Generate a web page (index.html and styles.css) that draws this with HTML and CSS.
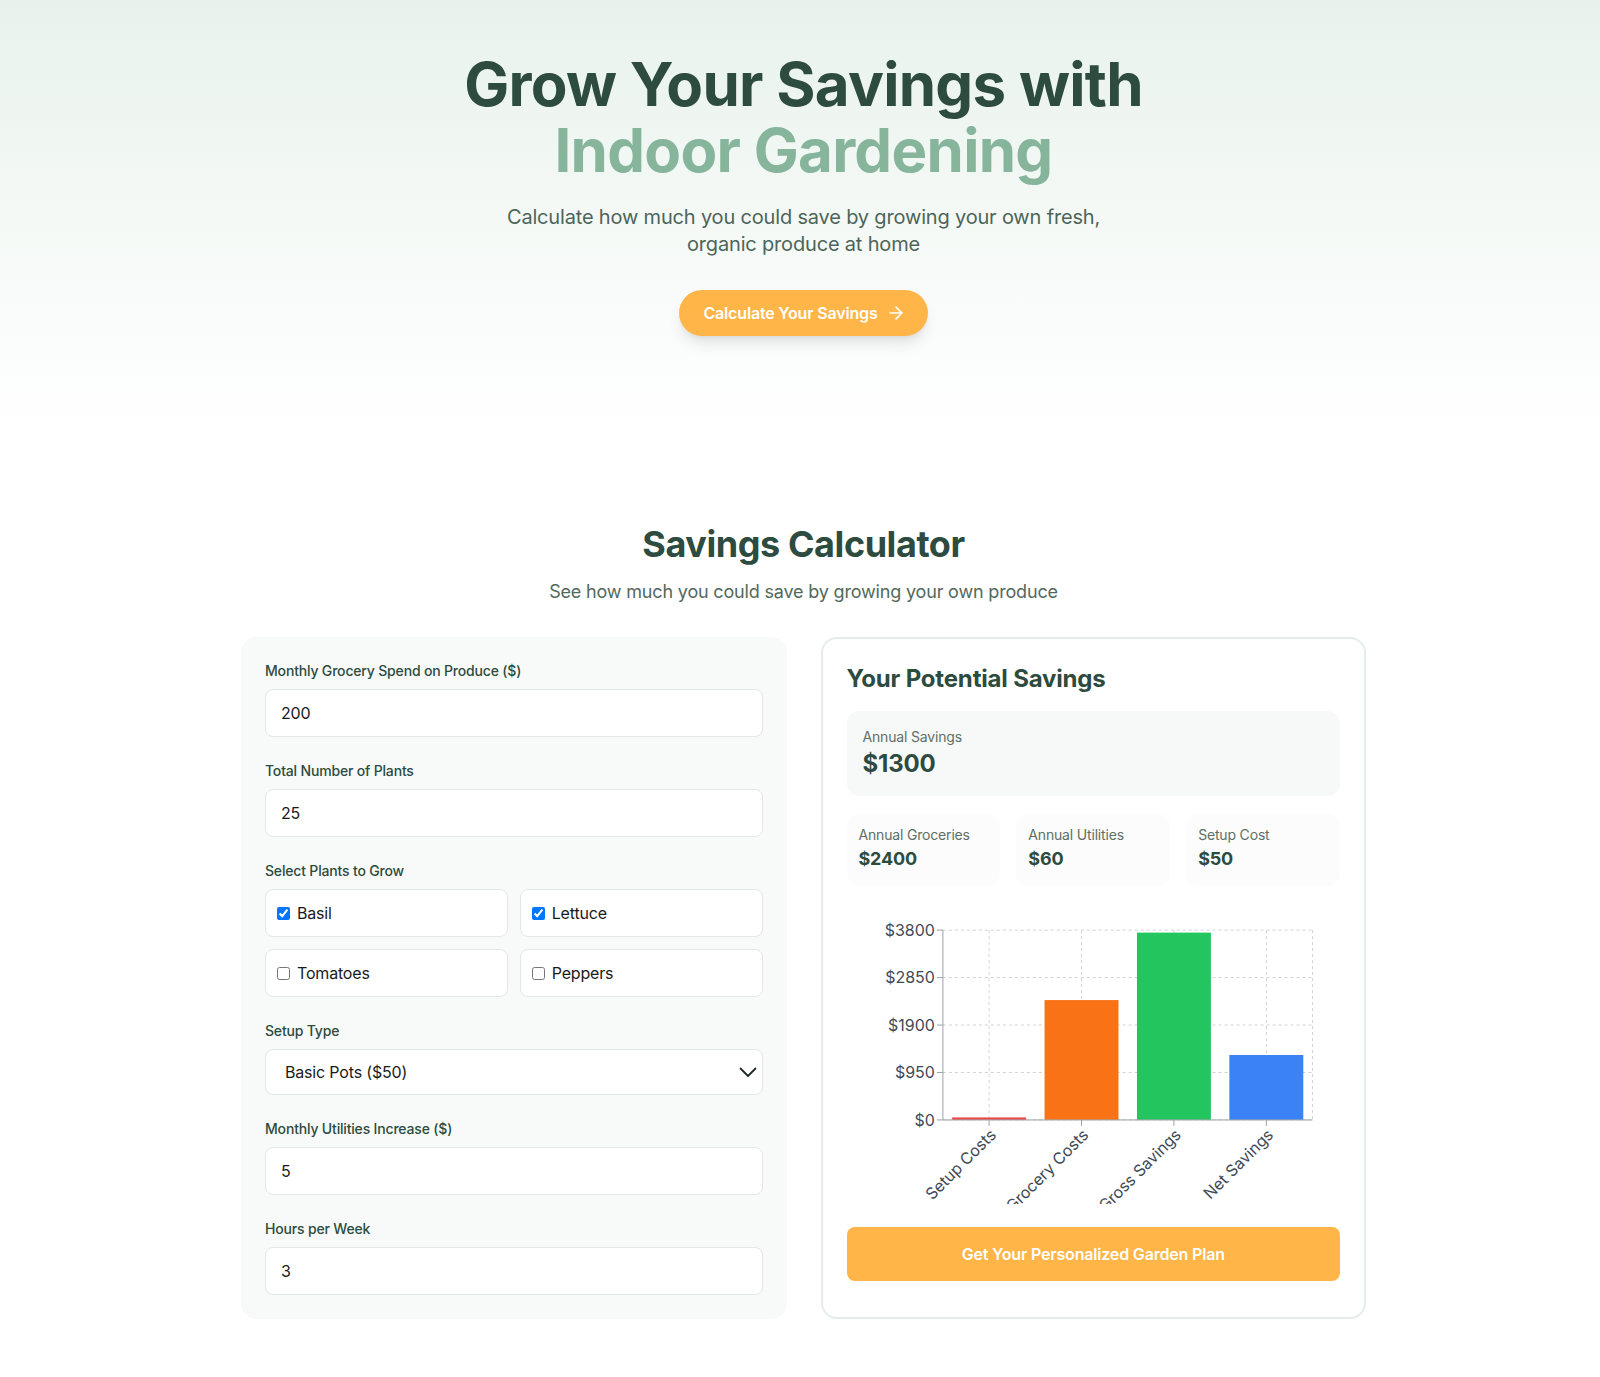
FILE: index.html
```html
<!DOCTYPE html>
<html lang="en">
<head>
<meta charset="utf-8">
<title>Indoor Gardening Savings</title>
<link rel="stylesheet" href="styles.css">
</head>
<body>
<section class="hero">
  <h1 class="hero-title">Grow Your Savings with <span class="hero-accent">Indoor Gardening</span></h1>
  <p class="hero-sub">Calculate how much you could save by growing your own fresh, organic produce at home</p>
  <button class="cta" type="button">Calculate Your Savings
    <svg class="cta-icon" viewBox="0 0 24 24" width="20" height="20" fill="none" stroke="currentColor" stroke-width="2" stroke-linecap="round" stroke-linejoin="round"><path d="M5 12h14"/><path d="M12 5l7 7-7 7"/></svg>
  </button>
</section>

<section class="calc">
  <div class="calc-inner">
    <h2 class="calc-title">Savings Calculator</h2>
    <p class="calc-sub">See how much you could save by growing your own produce</p>

    <div class="calc-grid">
      <div class="form-panel">
        <div class="field">
          <label class="field-label">Monthly Grocery Spend on Produce ($)</label>
          <input class="text-input" type="text" value="200">
        </div>
        <div class="field">
          <label class="field-label">Total Number of Plants</label>
          <input class="text-input" type="text" value="25">
        </div>
        <div class="field">
          <label class="field-label">Select Plants to Grow</label>
          <div class="plant-grid">
            <label class="plant"><input type="checkbox" class="plant-check" checked>Basil</label>
            <label class="plant"><input type="checkbox" class="plant-check" checked>Lettuce</label>
            <label class="plant"><input type="checkbox" class="plant-check">Tomatoes</label>
            <label class="plant"><input type="checkbox" class="plant-check">Peppers</label>
          </div>
        </div>
        <div class="field">
          <label class="field-label">Setup Type</label>
          <div class="select-wrap">
            <select class="select-input">
              <option>Basic Pots ($50)</option>
              <option>Hydroponic Kit ($200)</option>
            </select>
            <svg class="select-chevron" viewBox="0 0 18 10" width="18" height="10" fill="none" stroke="#1f2a24" stroke-width="1.8" stroke-linecap="round" stroke-linejoin="round"><path d="M1.5 1.5l7.5 7.5 7.5-7.5"/></svg>
          </div>
        </div>
        <div class="field">
          <label class="field-label">Monthly Utilities Increase ($)</label>
          <input class="text-input" type="text" value="5">
        </div>
        <div class="field">
          <label class="field-label">Hours per Week</label>
          <input class="text-input" type="text" value="3">
        </div>
      </div>

      <div class="results-panel">
        <h3 class="results-title">Your Potential Savings</h3>
        <div class="savings-box">
          <div class="stat-label">Annual Savings</div>
          <div class="savings-value">$1300</div>
        </div>
        <div class="stats">
          <div class="stat">
            <div class="stat-label">Annual Groceries</div>
            <div class="stat-value">$2400</div>
          </div>
          <div class="stat">
            <div class="stat-label">Annual Utilities</div>
            <div class="stat-value">$60</div>
          </div>
          <div class="stat">
            <div class="stat-label">Setup Cost</div>
            <div class="stat-value">$50</div>
          </div>
        </div>

        <svg class="chart" viewBox="0 0 494 295" width="494" height="295">
          <g class="grid" stroke="#cfd3d6" stroke-dasharray="3 3" fill="none">
            <line x1="96" y1="21" x2="466" y2="21"/>
            <line x1="96" y1="68.5" x2="466" y2="68.5"/>
            <line x1="96" y1="116" x2="466" y2="116"/>
            <line x1="96" y1="163.5" x2="466" y2="163.5"/>
            <line x1="96" y1="211" x2="466" y2="211"/>
            <line x1="142.25" y1="21" x2="142.25" y2="211"/>
            <line x1="234.75" y1="21" x2="234.75" y2="211"/>
            <line x1="327.25" y1="21" x2="327.25" y2="211"/>
            <line x1="419.75" y1="21" x2="419.75" y2="211"/>
            <line x1="466" y1="21" x2="466" y2="211"/>
          </g>
          <rect x="105.25" y="208.5" width="74" height="2.5" fill="#ef4444"/>
          <rect x="197.75" y="91" width="74" height="120" fill="#f97316"/>
          <rect x="290.25" y="23.5" width="74" height="187.5" fill="#22c55e"/>
          <rect x="382.75" y="146" width="74" height="65" fill="#3b82f6"/>
          <g stroke="#9ca3a6" fill="none">
            <line x1="96" y1="21" x2="96" y2="211"/>
            <line x1="96" y1="211" x2="466" y2="211"/>
            <line x1="90" y1="21" x2="96" y2="21"/>
            <line x1="90" y1="68.5" x2="96" y2="68.5"/>
            <line x1="90" y1="116" x2="96" y2="116"/>
            <line x1="90" y1="163.5" x2="96" y2="163.5"/>
            <line x1="90" y1="211" x2="96" y2="211"/>
            <line x1="142.25" y1="211" x2="142.25" y2="217"/>
            <line x1="234.75" y1="211" x2="234.75" y2="217"/>
            <line x1="327.25" y1="211" x2="327.25" y2="217"/>
            <line x1="419.75" y1="211" x2="419.75" y2="217"/>
          </g>
          <g class="tick-text" text-anchor="end">
            <text x="88" y="21" dy="0.355em">$3800</text>
            <text x="88" y="68.5" dy="0.355em">$2850</text>
            <text x="88" y="116" dy="0.355em">$1900</text>
            <text x="88" y="163.5" dy="0.355em">$950</text>
            <text x="88" y="211" dy="0.355em">$0</text>
            <text x="142.25" y="219" dy="0.71em" transform="rotate(-45 142.25 219)">Setup Costs</text>
            <text x="234.75" y="219" dy="0.71em" transform="rotate(-45 234.75 219)">Grocery Costs</text>
            <text x="327.25" y="219" dy="0.71em" transform="rotate(-45 327.25 219)">Gross Savings</text>
            <text x="419.75" y="219" dy="0.71em" transform="rotate(-45 419.75 219)">Net Savings</text>
          </g>
        </svg>

        <button class="plan-btn" type="button">Get Your Personalized Garden Plan</button>
      </div>
    </div>
  </div>
</section>
</body>
</html>
```

FILE: styles.css
```css
html, body {
  margin: 0;
  padding: 0;
  background: #ffffff;
}

body {
  font-family: Inter, "Noto Sans", "Liberation Sans", sans-serif;
  color: #1f2a24;
  letter-spacing: -0.011em;
}

.hero {
  background: linear-gradient(180deg, #e8f2ec 0%, #f3f8f5 45%, #ffffff 100%);
  padding: 51px 0 92px 7px;
  text-align: center;
}

.hero-title {
  margin: 0;
  font-size: 60px;
  line-height: 66px;
  font-weight: 700;
  color: #2d4b3e;
  letter-spacing: -0.012em;
}

.hero-accent {
  display: block;
  color: #86b59c;
}

.hero-sub {
  margin: 21px auto 0;
  max-width: 620px;
  font-size: 20px;
  line-height: 27px;
  color: #4d6559;
}

.cta {
  margin-top: 32px;
  display: inline-flex;
  align-items: center;
  gap: 8px;
  padding: 12px 22px 12px 24px;
  border: 0;
  border-radius: 9999px;
  background: #ffb547;
  color: #ffffff;
  font-family: Inter, "Noto Sans", sans-serif;
  font-size: 16px;
  line-height: 22px;
  font-weight: 600;
  letter-spacing: -0.011em;
  box-shadow: 0 10px 15px -3px rgba(0, 0, 0, 0.1), 0 4px 6px -4px rgba(0, 0, 0, 0.1);
}

.cta-icon {
  display: block;
}

.calc {
  padding: 96px 0 61px 7px;
}

.calc-inner {
  width: 1125px;
  margin: 0 auto;
}

.calc-title {
  margin: 0;
  text-align: center;
  font-size: 36px;
  line-height: 40px;
  font-weight: 700;
  color: #2d4b3e;
  letter-spacing: -0.012em;
}

.calc-sub {
  margin: 14px 0 0;
  text-align: center;
  font-size: 18px;
  line-height: 28px;
  color: #52695d;
}

.calc-grid {
  margin-top: 31px;
  display: grid;
  grid-template-columns: 1fr 1fr;
  gap: 34px;
}

.form-panel {
  background: #f7faf8;
  border-radius: 16px;
  padding: 24px;
}

.field {
  margin-bottom: 24px;
}

.field:last-child {
  margin-bottom: 0;
}

.field-label {
  display: block;
  margin-bottom: 8px;
  font-size: 14px;
  line-height: 20px;
  font-weight: 500;
  color: #2d4b3e;
}

.text-input {
  box-sizing: border-box;
  display: block;
  width: 100%;
  height: 48px;
  padding: 0 15px;
  border: 1px solid #e2e9e5;
  border-radius: 8px;
  background: #ffffff;
  font-family: Inter, "Noto Sans", sans-serif;
  font-size: 16px;
  letter-spacing: -0.011em;
  color: #1a1a1a;
  outline: none;
}

.plant-grid {
  display: grid;
  grid-template-columns: 1fr 1fr;
  gap: 12px;
}

.plant {
  box-sizing: border-box;
  display: flex;
  align-items: center;
  gap: 7px;
  height: 48px;
  padding: 0 11px;
  border: 1px solid #e2e9e5;
  border-radius: 8px;
  background: #ffffff;
  font-size: 16px;
  color: #1a1a1a;
}

.plant-check {
  margin: 0;
  width: 13px;
  height: 13px;
}

.select-wrap {
  position: relative;
}

.select-input {
  box-sizing: border-box;
  display: block;
  width: 100%;
  height: 46px;
  padding: 0 40px 0 19px;
  border: 1px solid #e2e9e5;
  border-radius: 8px;
  background: #ffffff;
  font-family: Inter, "Noto Sans", sans-serif;
  font-size: 16px;
  letter-spacing: -0.011em;
  color: #1a1a1a;
  appearance: none;
  -webkit-appearance: none;
  outline: none;
}

.select-chevron {
  position: absolute;
  right: 6px;
  top: 18px;
  pointer-events: none;
}

.results-panel {
  background: #ffffff;
  border: 2px solid #e4ede9;
  border-radius: 16px;
  padding: 24px;
}

.results-title {
  margin: 0 0 16px;
  font-size: 24px;
  line-height: 32px;
  font-weight: 700;
  color: #2d4b3e;
}

.savings-box {
  background: #f6f9f7;
  border-radius: 12px;
  padding: 16px;
  margin-bottom: 18px;
}

.stat-label {
  font-size: 14px;
  line-height: 20px;
  color: #5f6f67;
}

.savings-value {
  font-size: 24px;
  line-height: 32px;
  font-weight: 700;
  color: #2d4b3e;
  margin-top: 1px;
}

.stats {
  display: grid;
  grid-template-columns: repeat(3, 1fr);
  gap: 16px;
}

.stat {
  background: #fbfcfb;
  border-radius: 12px;
  padding: 11px 12px 13px;
}

.stat-value {
  font-size: 18px;
  line-height: 28px;
  font-weight: 700;
  color: #2d4b3e;
}

.chart {
  display: block;
  margin-top: 23px;
  width: 100%;
  height: 295px;
  overflow: hidden;
}

.tick-text {
  font-family: Inter, "Noto Sans", sans-serif;
  font-size: 16px;
  letter-spacing: 0;
  fill: #3f4a56;
}

.plan-btn {
  display: block;
  margin-top: 23px;
  width: 100%;
  height: 54px;
  border: 0;
  border-radius: 8px;
  background: #ffb547;
  color: #ffffff;
  font-family: Inter, "Noto Sans", sans-serif;
  font-size: 16px;
  font-weight: 600;
  letter-spacing: -0.011em;
}
```
